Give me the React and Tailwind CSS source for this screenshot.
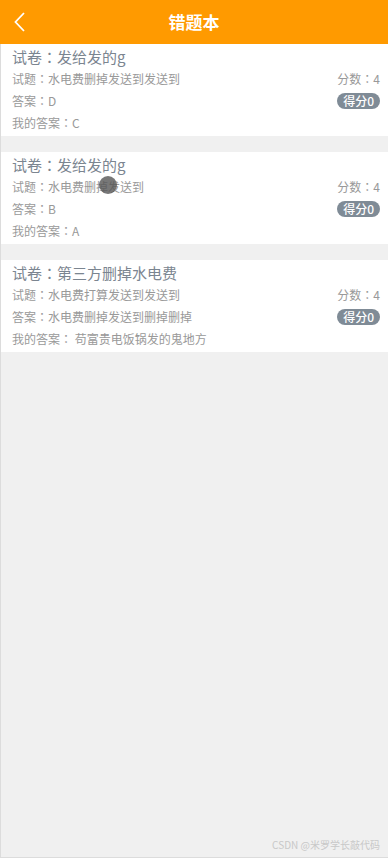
import React from 'react';

const records = [
  { paper: '发给发的g', question: '水电费删掉发送到发送到', score: 4, answer: 'D', mine: 'C', got: 0 },
  { paper: '发给发的g', question: '水电费删掉发送到', score: 4, answer: 'B', mine: 'A', got: 0 },
  { paper: '第三方删掉水电费', question: '水电费打算发送到发送到', score: 4, answer: '水电费删掉发送到删掉删掉', mine: ' 苟富贵电饭锅发的鬼地方', got: 0 },
];

const font = { fontFamily: '"Noto Sans CJK SC", "Liberation Sans", sans-serif' };
const colonFont = { fontFamily: '"Noto Sans CJK JP", sans-serif' };

// full-width colon, centred like the original
const C = () => <span style={colonFont}>：</span>;

const Card = ({ item }) => (
  <div className="bg-white h-[92px] pl-[11px] pr-[8px] pt-[2px]">
    <div className="text-[15px] leading-[22px] text-[#7b8590]">试卷<C />{item.paper}</div>
    <div className="flex justify-between items-center h-[22px] text-[12px] text-[#999]">
      <span>试题<C />{item.question}</span>
      <span>分数<C />{item.score}</span>
    </div>
    <div className="flex justify-between items-center h-[22px] text-[12px] text-[#999]">
      <span>答案<C />{item.answer}</span>
      <span className="bg-[#7f8b96] text-white rounded-full px-[6px] h-[16px] leading-[16px] text-[12px] font-medium">得分{item.got}</span>
    </div>
    <div className="flex items-center h-[22px] text-[12px] text-[#999] whitespace-pre">我的答案<C />{item.mine}</div>
  </div>
);

const App = () => {
  return (
    <div className="relative w-[388px] h-[858px] bg-[#f0f0f0] flex flex-col" style={font}>
      <div className="h-[44px] bg-[#ff9a00] flex items-center relative shrink-0">
        <svg className="absolute left-[13px] top-[11px]" width="14" height="22" viewBox="0 0 14 22">
          <path d="M11 2 L2.5 11 L11 20" stroke="white" strokeWidth="1.8" fill="none" />
        </svg>
        <div className="w-full text-center text-white text-[17px] font-bold">错题本</div>
      </div>
      <div className="flex-1 flex flex-col gap-[16px] border-l border-b border-[#dcdcdc]">
        {records.map((r, i) => (
          <Card key={i} item={r} />
        ))}
      </div>
      <div className="absolute right-[8px] bottom-[6px] text-[10px] text-[#c8c8c8]">CSDN @米罗学长敲代码</div>
      <div className="absolute left-[99px] top-[176px] w-[18px] h-[18px] rounded-full bg-[#555] opacity-80"></div>
    </div>
  );
};

export default App;
